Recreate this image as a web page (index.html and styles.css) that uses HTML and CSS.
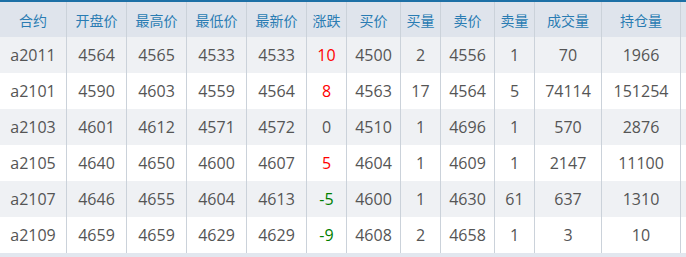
FILE: index.html
```html
<!DOCTYPE html>
<html lang="zh">
<head>
<meta charset="utf-8">
<link rel="stylesheet" href="styles.css">
</head>
<body>
<div class="board">
  <div class="row head">
    <div class="cell">合约</div><div class="cell">开盘价</div><div class="cell">最高价</div><div class="cell">最低价</div><div class="cell">最新价</div><div class="cell">涨跌</div><div class="cell">买价</div><div class="cell">买量</div><div class="cell">卖价</div><div class="cell">卖量</div><div class="cell">成交量</div><div class="cell">持仓量</div>
  </div>
  <div class="row odd">
    <div class="cell">a2011</div><div class="cell">4564</div><div class="cell">4565</div><div class="cell">4533</div><div class="cell">4533</div><div class="cell up">10</div><div class="cell">4500</div><div class="cell">2</div><div class="cell">4556</div><div class="cell">1</div><div class="cell">70</div><div class="cell">1966</div>
  </div>
  <div class="row">
    <div class="cell">a2101</div><div class="cell">4590</div><div class="cell">4603</div><div class="cell">4559</div><div class="cell">4564</div><div class="cell up">8</div><div class="cell">4563</div><div class="cell">17</div><div class="cell">4564</div><div class="cell">5</div><div class="cell">74114</div><div class="cell">151254</div>
  </div>
  <div class="row odd">
    <div class="cell">a2103</div><div class="cell">4601</div><div class="cell">4612</div><div class="cell">4571</div><div class="cell">4572</div><div class="cell">0</div><div class="cell">4510</div><div class="cell">1</div><div class="cell">4696</div><div class="cell">1</div><div class="cell">570</div><div class="cell">2876</div>
  </div>
  <div class="row">
    <div class="cell">a2105</div><div class="cell">4640</div><div class="cell">4650</div><div class="cell">4600</div><div class="cell">4607</div><div class="cell up">5</div><div class="cell">4604</div><div class="cell">1</div><div class="cell">4609</div><div class="cell">1</div><div class="cell">2147</div><div class="cell">11100</div>
  </div>
  <div class="row odd">
    <div class="cell">a2107</div><div class="cell">4646</div><div class="cell">4655</div><div class="cell">4604</div><div class="cell">4613</div><div class="cell down">-5</div><div class="cell">4600</div><div class="cell">1</div><div class="cell">4630</div><div class="cell">61</div><div class="cell">637</div><div class="cell">1310</div>
  </div>
  <div class="row">
    <div class="cell">a2109</div><div class="cell">4659</div><div class="cell">4659</div><div class="cell">4629</div><div class="cell">4629</div><div class="cell down">-9</div><div class="cell">4608</div><div class="cell">2</div><div class="cell">4658</div><div class="cell">1</div><div class="cell">3</div><div class="cell">10</div>
  </div>
</div>
</body>
</html>
```

FILE: styles.css
```css
html, body {
  margin: 0;
  padding: 0;
  background: #ffffff;
}
.board {
  width: 686px;
  height: 257px;
  border-top: 2px solid #1d70a6;
  box-sizing: border-box;
  background: #e2e7ef;
  font-family: "Open Sans", "Noto Sans CJK SC", sans-serif;
}
.row {
  display: grid;
  grid-template-columns: 67px 60px 60px 60px 60px 40px 54px 40px 54px 40px 67px 79px;
  height: 36px;
  background: #ffffff;
}
.row.odd {
  background: #eff1f4;
}
.row.head {
  height: 35px;
  background: #dfe4ec;
}
.cell {
  box-sizing: border-box;
  border-right: 1px solid #cbd2da;
  display: flex;
  align-items: center;
  justify-content: center;
  font-size: 16px;
  color: #555555;
  white-space: nowrap;
}
.head .cell {
  font-family: "Noto Sans CJK SC", sans-serif;
  font-size: 14px;
  color: #2a7cb3;
}
.cell.up {
  color: #ff0000;
}
.cell.down {
  color: #008000;
}
```
